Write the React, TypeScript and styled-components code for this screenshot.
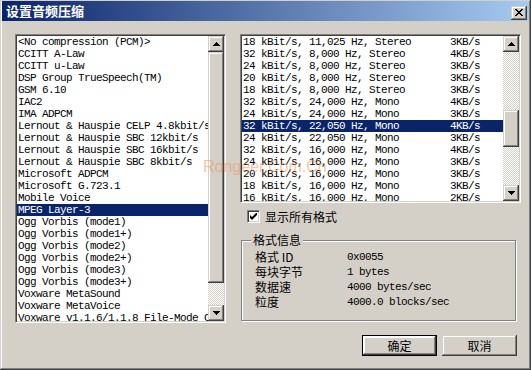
import styled, { createGlobalStyle } from "styled-components";

const GlobalStyle = createGlobalStyle`
body {
margin:0;
background:#d4d0c8;
}
* { box-sizing:border-box; }
`

const raised = `
background:#d4d0c8;
box-shadow: inset -1px -1px #404040, inset 1px 1px #d4d0c8, inset -2px -2px #808080, inset 2px 2px #ffffff;
`

const mono = `
font-family:"Liberation Mono", "Noto Sans CJK SC", monospace;
font-size:11px;
letter-spacing:-0.6px;
`

const Window = styled.div`
position:relative;
width:531px;
height:370px;
padding:1px 2px;
background:#d4d0c8;
box-shadow: inset -1px -1px #404040, inset 1px 1px #d4d0c8, inset -2px -2px #808080, inset 2px 2px #ffffff;
display:flex;
flex-direction:column;
overflow:hidden;
`
const TitleBar = styled.div`
height:20px;
display:flex;
align-items:center;
justify-content:space-between;
padding:0 2px 0 4px;
background:linear-gradient(to right, #0a246a, #a6caf0);
`
const Title = styled.span`
color:#fff;
font-family:"Noto Sans CJK SC", sans-serif;
font-weight:bold;
font-size:13px;
line-height:14px;
`
const CloseButton = styled.div`
${raised}
width:16px;
height:14px;
display:flex;
align-items:center;
justify-content:center;
margin-top:3px;
`
const Body = styled.div`
flex:1;
display:flex;
gap:14px;
padding:13px 10px 0 13px;
`
const ListBox = styled.div<{ $w: number; $h: number }>`
width:${({ $w }) => $w}px;
height:${({ $h }) => $h}px;
background:#fff;
border-style:solid;
border-width:1px;
border-color:#808080 #fff #fff #808080;
box-shadow: inset 1px 1px #404040, inset -1px -1px #d4d0c8;
padding:1px;
display:flex;
`
const Rows = styled.div`
flex:1;
overflow:hidden;
`
const Row = styled.div<{ $sel?: boolean }>`
${mono}
height:12px;
line-height:12px;
padding-left:1px;
white-space:nowrap;
overflow:hidden;
display:flex;
color:${({ $sel }) => ($sel ? "#fff" : "#000")};
background:${({ $sel }) => ($sel ? "#0a246a" : "transparent")};
`
const RateCol = styled.span`
width:207px;
flex:none;
`
const ScrollBar = styled.div`
width:16px;
display:flex;
flex-direction:column;
`
const ArrowButton = styled.div`
${raised}
width:16px;
height:16px;
flex:none;
display:flex;
align-items:center;
justify-content:center;
`
const Track = styled.div<{ $h?: number }>`
flex:${({ $h }) => ($h ? "none" : "1")};
height:${({ $h }) => ($h ? `${$h}px` : "auto")};
background-color:#fff;
background-image:conic-gradient(#d4d0c8 25%, #fff 0 50%, #d4d0c8 0 75%, #fff 0);
background-size:2px 2px;
`
const Thumb = styled.div<{ $h: number }>`
${raised}
height:${({ $h }) => $h}px;
flex:none;
`
const RightCol = styled.div`
width:281px;
display:flex;
flex-direction:column;
`
const CheckRow = styled.label`
display:flex;
align-items:center;
gap:5px;
margin:7px 0 0 7px;
height:13px;
font-family:"Noto Sans CJK SC", sans-serif;
font-size:12px;
color:#000;
`
const CheckBox = styled.span`
width:13px;
height:13px;
background:#fff;
border-style:solid;
border-width:1px;
border-color:#808080 #fff #fff #808080;
box-shadow: inset 1px 1px #404040, inset -1px -1px #d4d0c8;
display:flex;
align-items:center;
justify-content:center;
`
const Group = styled.div`
position:relative;
margin:17px 5px 0 1px;
height:81px;
border:1px solid #808080;
box-shadow: inset 1px 1px #fff, 1px 1px #fff;
padding:8px 0 0 13px;
`
const Legend = styled.span`
position:absolute;
top:-8px;
left:9px;
padding:0 2px;
background:#d4d0c8;
font-family:"Noto Sans CJK SC", sans-serif;
font-size:12px;
line-height:14px;
`
const InfoRow = styled.div`
display:flex;
align-items:center;
height:15px;
`
const InfoLabel = styled.span`
width:92px;
font-family:"Noto Sans CJK SC", sans-serif;
font-size:12px;
`
const InfoValue = styled.span`
${mono}
`
const Buttons = styled.div`
display:flex;
justify-content:flex-end;
gap:5px;
margin-top:14px;
padding-right:4px;
`
const Button = styled.div<{ $default?: boolean }>`
width:75px;
height:21px;
display:flex;
align-items:center;
justify-content:center;
font-family:"Noto Sans CJK SC", sans-serif;
font-size:12px;
background:#d4d0c8;
border:${({ $default }) => ($default ? "1px solid #000" : "none")};
box-shadow: inset -1px -1px #404040, inset 1px 1px ${({ $default }) => ($default ? "#fff" : "#d4d0c8")}, inset -2px -2px #808080, inset 2px 2px #ffffff;
`
const Watermark = styled.span`
position:absolute;
left:203px;
top:158px;
font-family:"Liberation Sans", sans-serif;
font-size:16px;
color:rgba(238,140,80,0.5);
pointer-events:none;
`

const Up = () => (
    <svg width="7" height="4" viewBox="0 0 7 4"><path d="M3 0h1v1h1v1h1v1h1v1H0V3h1V2h1V1h1z" fill="#000" /></svg>
);
const Down = () => (
    <svg width="7" height="4" viewBox="0 0 7 4"><path d="M0 0h7v1H6v1H5v1H4v1H3V3H2V2H1V1H0z" fill="#000" /></svg>
);

const codecs = [
    "<No compression (PCM)>", "CCITT A-Law", "CCITT u-Law", "DSP Group TrueSpeech(TM)", "GSM 6.10", "IAC2",
    "IMA ADPCM", "Lernout & Hauspie CELP 4.8kbit/s", "Lernout & Hauspie SBC 12kbit/s", "Lernout & Hauspie SBC 16kbit/s",
    "Lernout & Hauspie SBC 8kbit/s", "Microsoft ADPCM", "Microsoft G.723.1", "Mobile Voice", "MPEG Layer-3",
    "Ogg Vorbis (mode1)", "Ogg Vorbis (mode1+)", "Ogg Vorbis (mode2)", "Ogg Vorbis (mode2+)", "Ogg Vorbis (mode3)",
    "Ogg Vorbis (mode3+)", "Voxware MetaSound", "Voxware MetaVoice", "Voxware v1.1.6/1.1.8 File-Mode Codec",
];

const formats: [string, string][] = [
    ["18 kBit/s, 11,025 Hz, Stereo", "3KB/s"],
    ["32 kBit/s, 8,000 Hz, Stereo", "4KB/s"],
    ["24 kBit/s, 8,000 Hz, Stereo", "3KB/s"],
    ["20 kBit/s, 8,000 Hz, Stereo", "3KB/s"],
    ["18 kBit/s, 8,000 Hz, Stereo", "3KB/s"],
    ["32 kBit/s, 24,000 Hz, Mono", "4KB/s"],
    ["24 kBit/s, 24,000 Hz, Mono", "3KB/s"],
    ["32 kBit/s, 22,050 Hz, Mono", "4KB/s"],
    ["24 kBit/s, 22,050 Hz, Mono", "3KB/s"],
    ["32 kBit/s, 16,000 Hz, Mono", "4KB/s"],
    ["24 kBit/s, 16,000 Hz, Mono", "3KB/s"],
    ["20 kBit/s, 16,000 Hz, Mono", "3KB/s"],
    ["18 kBit/s, 16,000 Hz, Mono", "3KB/s"],
    ["16 kBit/s, 16,000 Hz, Mono", "2KB/s"],
];

const info: [string, string][] = [
    ["格式 ID", "0x0055"],
    ["每块字节", "1 bytes"],
    ["数据速", "4000 bytes/sec"],
    ["粒度", "4000.0 blocks/sec"],
];

export default function App() {
    return (
        <>
            <GlobalStyle />
            <Window>
                <TitleBar>
                    <Title>设置音频压缩</Title>
                    <CloseButton>
                        <svg width="8" height="7" viewBox="0 0 8 7">
                            <path d="M0 0l7 7M1 0l7 7M7 0L0 7M8 0L1 7" stroke="#000" strokeWidth="1" />
                        </svg>
                    </CloseButton>
                </TitleBar>
                <Body>
                    <ListBox $w={211} $h={289}>
                        <Rows>
                            {codecs.map((c) => (
                                <Row key={c} $sel={c === "MPEG Layer-3"}>{c}</Row>
                            ))}
                        </Rows>
                        <ScrollBar>
                            <ArrowButton><Up /></ArrowButton>
                            <Thumb $h={231} />
                            <Track />
                            <ArrowButton><Down /></ArrowButton>
                        </ScrollBar>
                    </ListBox>
                    <RightCol>
                        <ListBox $w={281} $h={169}>
                            <Rows>
                                {formats.map(([r, k], i) => (
                                    <Row key={r} $sel={i === 7}>
                                        <RateCol>{r}</RateCol>
                                        <span>{k}</span>
                                    </Row>
                                ))}
                            </Rows>
                            <ScrollBar>
                                <ArrowButton><Up /></ArrowButton>
                                <Track $h={58} />
                                <Thumb $h={37} />
                                <Track />
                                <ArrowButton><Down /></ArrowButton>
                            </ScrollBar>
                        </ListBox>
                        <CheckRow>
                            <CheckBox>
                                <svg width="7" height="7" viewBox="0 0 7 7">
                                    <path d="M0 2v3l2 2 5-5V-1L2 4z" fill="#000" />
                                </svg>
                            </CheckBox>
                            显示所有格式
                        </CheckRow>
                        <Group>
                            <Legend>格式信息</Legend>
                            {info.map(([l, v]) => (
                                <InfoRow key={l}>
                                    <InfoLabel>{l}</InfoLabel>
                                    <InfoValue>{v}</InfoValue>
                                </InfoRow>
                            ))}
                        </Group>
                        <Buttons>
                            <Button $default>确定</Button>
                            <Button>取消</Button>
                        </Buttons>
                    </RightCol>
                </Body>
                <Watermark>Rongeer.Com.Cn</Watermark>
            </Window>
        </>
    );
}
